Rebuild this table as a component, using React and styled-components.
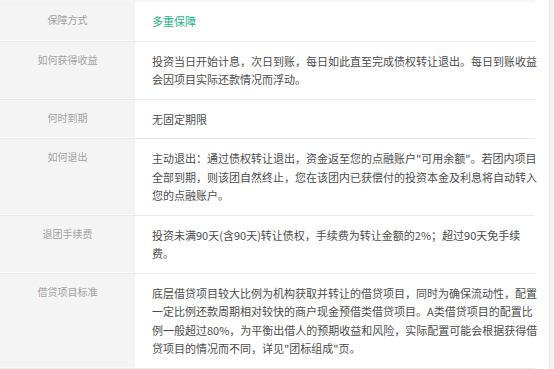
import React from 'react';
import styled, { createGlobalStyle } from 'styled-components';

const GlobalStyle = createGlobalStyle`
  html, body {
    margin: 0;
    padding: 0;
    background: #fff;
  }
  body {
    font-family: "Noto Sans CJK SC", "Liberation Sans", sans-serif;
  }
`;

const Page = styled.div`
  display: flex;
  justify-content: space-between;
  width: 554px;
  height: 369px;
  overflow: hidden;
`;

const Table = styled.div`
  width: 535px;
  border-top: 2px solid #f6f6f6;
`;

const Row = styled.div`
  display: flex;
  border-bottom: 1px solid #ebebeb;
`;

const Label = styled.div`
  width: 135px;
  flex-shrink: 0;
  background: #f4f4f4;
  color: #a3a3a3;
  font-size: 10px;
  line-height: 18px;
  text-align: center;
  padding: 9px 0 11px;
  box-shadow: inset 0 -1px 0 #fafafa;
`;

const Content = styled.div`
  flex: 1;
  padding: 10px 0 10px 17px;
  font-size: 11px;
  line-height: 18.5px;
  color: ${(p) => (p.green ? '#22b585' : '#4d4d4d')};
`;

const Line = styled.span`
  display: block;
  white-space: nowrap;
`;

const SideBar = styled.div`
  width: 4px;
  background: #f3f3f3;
  border-left: 1px solid #e6e6e6;
`;

const rows = [
  { label: '保障方式', green: true, lines: ['多重保障'] },
  {
    label: '如何获得收益',
    lines: [
      '投资当日开始计息，次日到账，每日如此直至完成债权转让退出。每日到账收益',
      '会因项目实际还款情况而浮动。',
    ],
  },
  { label: '何时到期', lines: ['无固定期限'] },
  {
    label: '如何退出',
    lines: [
      '主动退出：通过债权转让退出，资金返至您的点融账户"可用余额"。若团内项目',
      '全部到期，则该团自然终止，您在该团内已获偿付的投资本金及利息将自动转入',
      '您的点融账户。',
    ],
  },
  {
    label: '退团手续费',
    lines: [
      '投资未满90天(含90天)转让债权，手续费为转让金额的2%；超过90天免手续',
      '费。',
    ],
  },
  {
    label: '借贷项目标准',
    lines: [
      '底层借贷项目较大比例为机构获取并转让的借贷项目，同时为确保流动性，配置',
      '一定比例还款周期相对较快的商户现金预借类借贷项目。A类借贷项目的配置比',
      '例一般超过80%，为平衡出借人的预期收益和风险，实际配置可能会根据获得借',
      '贷项目的情况而不同，详见"团标组成"页。',
    ],
  },
];

const App = () => {
  return (
    <>
      <GlobalStyle />
      <Page>
        <Table>
          {rows.map((row) => (
            <Row key={row.label}>
              <Label>{row.label}</Label>
              <Content green={row.green}>
                {row.lines.map((line, i) => (
                  <Line key={i}>{line}</Line>
                ))}
              </Content>
            </Row>
          ))}
        </Table>
        <SideBar />
      </Page>
    </>
  );
};

export default App;
